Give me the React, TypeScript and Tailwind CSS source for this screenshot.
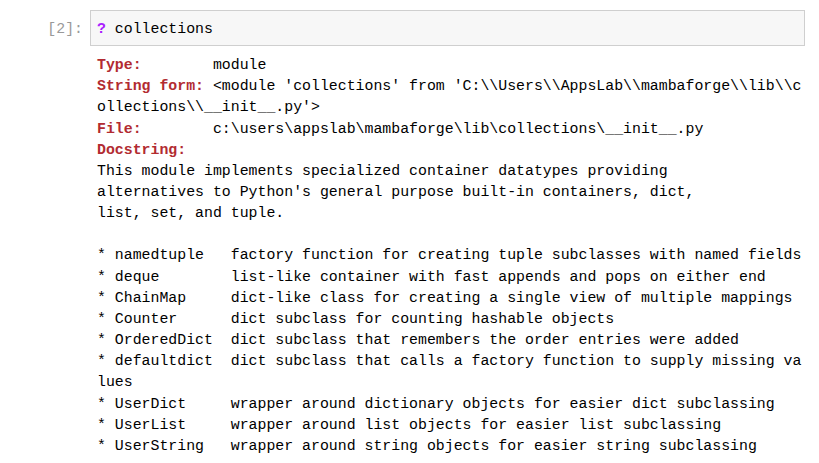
const mono = { fontFamily: '"Liberation Mono", "DejaVu Sans Mono", monospace' };

const docLines = [
  'This module implements specialized container datatypes providing',
  "alternatives to Python's general purpose built-in containers, dict,",
  'list, set, and tuple.',
  '',
  '* namedtuple   factory function for creating tuple subclasses with named fields',
  '* deque        list-like container with fast appends and pops on either end',
  '* ChainMap     dict-like class for creating a single view of multiple mappings',
  '* Counter      dict subclass for counting hashable objects',
  '* OrderedDict  dict subclass that remembers the order entries were added',
  '* defaultdict  dict subclass that calls a factory function to supply missing va',
  'lues',
  '* UserDict     wrapper around dictionary objects for easier dict subclassing',
  '* UserList     wrapper around list objects for easier list subclassing',
  '* UserString   wrapper around string objects for easier string subclassing',
];

function Label({ children }: { children: string }) {
  return <span className="font-bold text-[#b22b31]">{children}</span>;
}

export default function App() {
  return (
    <div className="w-[819px] h-[463px] bg-white overflow-hidden text-[14.87px] leading-[21.17px]" style={mono}>
      <div className="flex pt-[10px]">
        <div className="w-[90px] pr-[7px] pt-[3px] text-right text-[#999] flex items-center h-[36px] justify-end">[2]:</div>
        <div className="w-[715px] h-[36px] bg-[#f7f7f7] border border-[#cfcfcf] flex items-center pt-[3px] pl-[6px] text-black">
          <span className="font-bold text-[#aa22ff]">?</span>
          <span className="whitespace-pre"> collections</span>
        </div>
      </div>
      <div className="pl-[97px] pt-[9px] text-black whitespace-pre">
        <div><Label>Type:</Label>{'        module'}</div>
        <div><Label>String form:</Label>{" <module 'collections' from 'C:\\\\Users\\\\AppsLab\\\\mambaforge\\\\lib\\\\c"}</div>
        <div>{"ollections\\\\__init__.py'>"}</div>
        <div><Label>File:</Label>{'        c:\\users\\appslab\\mambaforge\\lib\\collections\\__init__.py'}</div>
        <div><Label>Docstring:</Label></div>
        {docLines.map((l, i) => (
          <div key={i} className="h-[21.17px]">{l}</div>
        ))}
      </div>
    </div>
  );
}
